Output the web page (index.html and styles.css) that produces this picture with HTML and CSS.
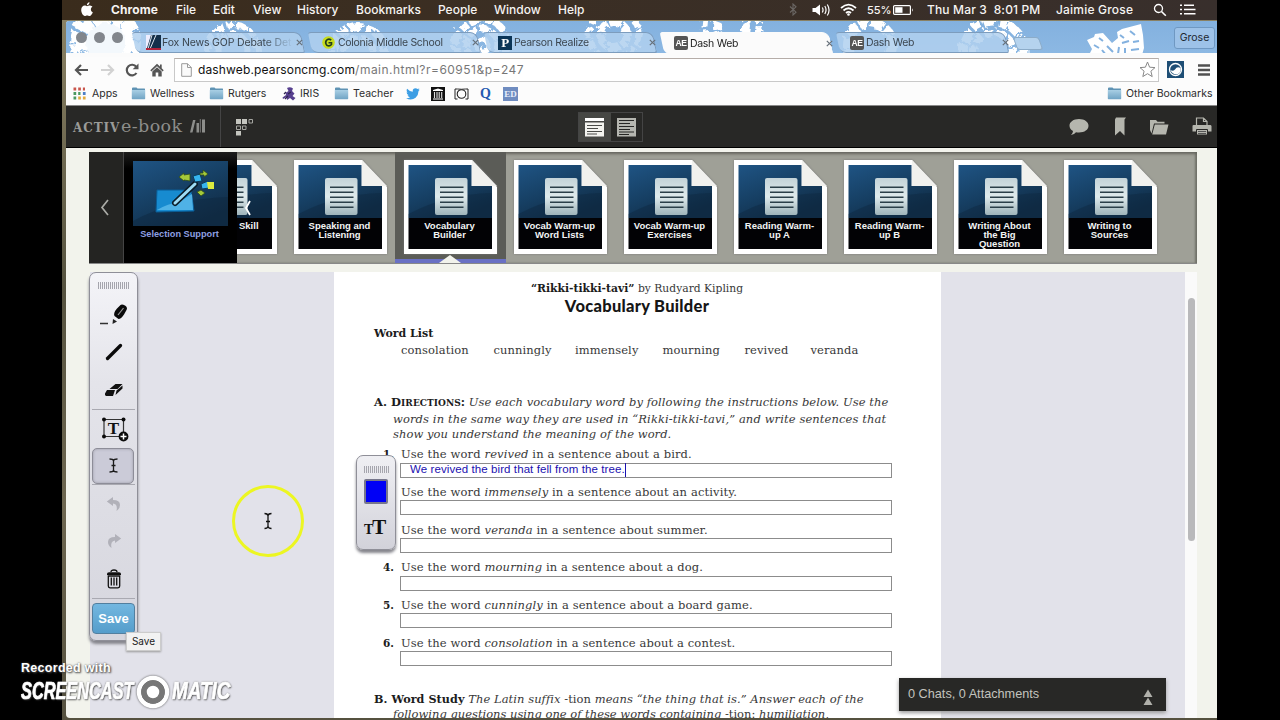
FILE: index.html
```html
<!DOCTYPE html>
<html lang="en">
<head>
<meta charset="utf-8">
<title>Dash Web</title>
<link rel="stylesheet" href="styles.css">
</head>
<body>
<svg class="defs" width="0" height="0">
  <defs>
    <linearGradient id="sky" x1="0" y1="0" x2="0.6" y2="1"><stop offset="0" stop-color="#1f5484"/><stop offset=".55" stop-color="#163f63"/><stop offset="1" stop-color="#112c45"/></linearGradient>
    <linearGradient id="paper" x1="0" y1="0" x2="0" y2="1"><stop offset="0" stop-color="#c3d3d8"/><stop offset=".5" stop-color="#dfeaec"/><stop offset="1" stop-color="#9fb4ba"/></linearGradient>
    <linearGradient id="fold" x1="0" y1="0" x2="0" y2="1"><stop offset="0" stop-color="#a9cfe4"/><stop offset="1" stop-color="#6fa3c4"/></linearGradient>
    <filter id="rough" x="-5%" y="-30%" width="110%" height="160%"><feTurbulence type="turbulence" baseFrequency=".11" numOctaves="2" seed="4"/><feDisplacementMap in="SourceGraphic" scale="7"/></filter>
    <symbol id="card" viewBox="0 0 93 94">
      <path d="M0 0H68L93 27V94H0z" fill="#fff"/>
      <path d="M68 0L93 26H68z" fill="#f1f1ee"/>
      <path d="M4.5 5H67.5V26H88V58H4.5z" fill="url(#sky)"/>
      <path d="M4.5 54Q42 34 88 33V58H4.5z" fill="#0d2840" opacity=".45"/>
      <path d="M4.500 58H88V89H4.500z" fill="#020205"/>
      <rect x="31" y="18" width="32.500" height="37" rx="2" fill="url(#paper)"/>
      <path d="M36 27.300H59.500M36 32.300H59.500M36 37.300H59.500M36 42.300H59.500M36 47.300H59.500" stroke="#2b3f49" stroke-width="1.400"/>
    </symbol>
    <symbol id="folder" viewBox="0 0 15 13">
      <path d="M1 1.500Q1 .5 2 .5H5.500L6.500 1.500H13.500Q14 1.500 14 2.500V11.500H1z" fill="#5f93b4"/>
      <path d="M.8 3H14.200V11.500Q14.200 12.300 13.500 12.300H1.500Q.8 12.300 .8 11.500z" fill="url(#fold)"/>
    </symbol>
    <symbol id="x" viewBox="0 0 7 7"><path d="M.8 .8L6.200 6.200M6.200 .8L.8 6.200" stroke="#66707a" stroke-width="1.200"/></symbol>
    <symbol id="ibeam" viewBox="0 0 10 18"><path d="M1.500 1.500Q4.500 1.500 5 3.500Q5.500 1.500 8.500 1.500M5 3V15M1.500 16.500Q4.500 16.500 5 14.500Q5.500 16.500 8.500 16.500M3 9.500H7" fill="none" stroke="#111" stroke-width="1.300"/></symbol>
  </defs>
</svg>
<div class="desktop">
  <header class="menubar">
    <svg class="apple" width="12" height="15" viewBox="0 0 12 15"><path d="M6 4.200C7 4.200 7.800 3.400 9 3.500C10.200 3.600 11 4.200 11.400 4.800C9.200 6.200 9.500 9.300 11.800 10.300C11 12.300 9.900 14 8.600 14C7.600 14 7.200 13.400 6.200 13.400C5.200 13.400 4.700 14 3.800 14C2 14 .2 10.700 .2 8.100C.2 5.300 1.900 3.600 3.700 3.600C4.800 3.600 5.400 4.200 6 4.200zM5.900 3.300C5.800 1.800 7 .5 8.500 .3C8.700 1.900 7.300 3.400 5.900 3.300z" fill="#fff"/></svg>
    <b class="m-chrome">Chrome</b><span class="m-file">File</span><span class="m-edit">Edit</span><span class="m-view">View</span><span class="m-history">History</span><span class="m-book">Bookmarks</span><span class="m-people">People</span><span class="m-window">Window</span><span class="m-help">Help</span>
    <svg class="bt" width="8" height="13" viewBox="0 0 8 13"><path d="M1 3.500L7 9.200L4 12V1L7 3.800L1 9.500" fill="none" stroke="#6b6764" stroke-width="1.100"/></svg>
    <svg class="vol" width="19" height="14" viewBox="0 0 19 14"><path d="M.5 5H3.500L8 1.500V12.500L3.500 9H.5z" fill="#fff"/><path d="M10.300 4.500Q11.800 7 10.300 9.500M12.800 3Q15.300 7 12.800 11M15.300 1.500Q18.800 7 15.300 12.500" fill="none" stroke="#fff" stroke-width="1.200"/></svg>
    <svg class="wifi" width="17" height="13" viewBox="0 0 17 13"><path d="M1 5Q8.500-1.800 16 5M3.500 7.500Q8.500 3 13.500 7.500M6 10Q8.500 7.800 11 10" fill="none" stroke="#fff" stroke-width="1.700"/><circle cx="8.500" cy="11.500" r="1.300" fill="#fff"/></svg>
    <span class="pct">55%</span>
    <svg class="batt" width="21" height="10" viewBox="0 0 21 10"><rect x=".6" y=".6" width="16.800" height="8.800" rx="1" fill="none" stroke="#fff" stroke-width="1.200"/><path d="M2.200 2.200H9.500V7.800H2.200z" fill="#fff"/><path d="M19 3.200Q20.700 5 19 6.800z" fill="#fff"/></svg>
    <span class="clock">Thu Mar 3&nbsp; 8:01 PM</span><span class="user">Jaimie Grose</span>
    <svg class="mag" width="14" height="14" viewBox="0 0 14 14"><circle cx="5.500" cy="5.500" r="4" fill="none" stroke="#fff" stroke-width="1.300"/><path d="M8.500 8.500L12.800 12.800" stroke="#fff" stroke-width="1.600"/></svg>
    <svg class="lst" width="16" height="11" viewBox="0 0 16 11"><path d="M0 1.200H2M0 5.500H2M0 9.800H2M4 1.200H14M4 5.500H15.500M4 9.800H15.500" stroke="#fff" stroke-width="1.600"/></svg>
  </header>

  <main class="window">
    <div class="tabs">
      <svg class="snow" width="1151" height="32" viewBox="0 0 1151 32">
        <g fill="none" stroke="#fff" filter="url(#rough)">
          <g transform="translate(38 20)"><circle r="32" stroke-width="8" stroke-dasharray="12 3 8 2"/><circle r="24" stroke-width="10" stroke-dasharray="18 2 12 1"/><circle r="10" stroke-width="20" stroke="#f3f8fc"/></g>
          <g transform="translate(165 27)"><circle r="25" stroke-width="6" stroke-dasharray="12 3 7 2"/><circle r="15" stroke-width="7" stroke-dasharray="9 2"/></g>
          <g transform="translate(291 30)"><circle r="26" stroke-width="8" stroke-dasharray="14 3 9 2"/><circle r="15" stroke-width="6" stroke-dasharray="9 3"/></g>
          <g transform="translate(414 22)"><circle r="26" stroke-width="7" stroke-dasharray="14 3 8 2"/><circle r="16" stroke-width="7" stroke-dasharray="10 2"/><circle r="6" stroke-width="5"/></g>
          <g transform="translate(546 12)"><circle r="25" stroke-width="7" stroke-dasharray="11 3 9 2"/><circle r="13" stroke-width="8" stroke-dasharray="12 2"/></g>
          <g transform="translate(664 4)"><circle r="27" stroke-width="7" stroke-dasharray="13 3 9 3"/><circle r="15" stroke-width="8" stroke-dasharray="8 3"/></g>
          <g transform="translate(802 22)"><circle r="22" stroke-width="10" stroke-dasharray="12 2 9 3"/></g>
          <g transform="translate(926 30)"><circle r="31" stroke-width="9" stroke-dasharray="13 3 9 2"/><circle r="20" stroke-width="8" stroke-dasharray="9 3"/></g>
        </g>
        <g transform="translate(1050 34)"><path d="M-29-15L-22-18L-21-21L-13-22L-4-12L2-17L1-23L6-26L25-31L27-20L28-7L26 0H-27L-24-6z" fill="#fff"/><path d="M-22-10L-17-7M-17-17L-13-14M-9-9L-3-3M-14-5L-10 0M4-20L8-17M14-24L19-20M6-12L13-14M17-13L23-14M3-8L2-1M9-7L9-1M15-5L23-6" stroke="#83b1df" stroke-width="2"/></g>
      </svg>
      <div class="lights"><i></i><i></i><i></i></div>
      <div class="tab t1"><svg class="fav" width="15" height="15" viewBox="0 0 15 15"><path d="M0 0H15V15H0z" fill="#14304a"/><path d="M0 0H5L1 13H0z" fill="#eef"/><path d="M6 0L2 14M10 0L4 14" stroke="#dfe6ee" stroke-width="1"/><path d="M0 13H15V15H0z" fill="#b0243a"/></svg><span class="name fade">Fox News GOP Debate Det</span><svg class="cl" width="7" height="7"><use href="#x"/></svg></div>
      <div class="tab t2"><svg class="fav" width="13" height="13" viewBox="0 0 13 13"><circle cx="6.500" cy="6.500" r="6.300" fill="#c6dc1c"/><path d="M9.200 4Q6.500 2 4.300 4.500Q2.800 7 4.800 9.200Q7.500 10.800 9.500 8.500V6.700H6.500" fill="none" stroke="#223c1c" stroke-width="1.600"/></svg><span class="name">Colonia Middle School</span><svg class="cl" width="7" height="7"><use href="#x"/></svg></div>
      <div class="tab t3"><span class="fav pearson">P</span><span class="name">Pearson Realize</span><svg class="cl" width="7" height="7"><use href="#x"/></svg></div>
      <div class="tab t4"><span class="fav ae">AE</span><span class="name">Dash Web</span><svg class="cl" width="7" height="7"><use href="#x"/></svg></div>
      <div class="tab t5"><span class="fav ae">AE</span><span class="name">Dash Web</span><svg class="cl" width="7" height="7"><use href="#x"/></svg></div>
      <div class="newtab"></div>
      <div class="profile">Grose</div>
    </div>

    <div class="toolbar">
      <svg class="nav back" width="15" height="12" viewBox="0 0 15 12"><path d="M14 6H2M7 1L2 6L7 11" fill="none" stroke="#555" stroke-width="2.200"/></svg>
      <svg class="nav fwd" width="15" height="12" viewBox="0 0 15 12"><path d="M1 6H13M8 1L13 6L8 11" fill="none" stroke="#d2d2d2" stroke-width="2.200"/></svg>
      <svg class="nav rel" width="14" height="14" viewBox="0 0 14 14"><path d="M11.500 10A5.300 5.300 0 1 1 11.300 3.800" fill="none" stroke="#555" stroke-width="2.200"/><path d="M13.500 .5V6.300H7.700z" fill="#555"/></svg>
      <svg class="nav home" width="14" height="14" viewBox="0 0 14 14"><path d="M7 .8L.3 7.200L1.400 8.400L7 3.200L12.600 8.400L13.700 7.200L11.700 5.200V1.500H10V3.600z" fill="#555"/><path d="M2.300 8.500L7 4.200L11.700 8.500V13.500H8.300V9.500H5.700V13.500H2.300z" fill="#555"/></svg>
      <div class="url"><svg width="11" height="14" viewBox="0 0 11 14"><path d="M.7 .7H6.500L10.300 4.500V13.300H.7zM6.500 .7V4.500H10.300" fill="#fafafa" stroke="#9a9a9a" stroke-width="1"/></svg><span class="addr">dashweb.pearsoncmg.com<em>/main.html?r=60951&amp;p=247</em></span><svg class="star" width="17" height="17" viewBox="0 0 17 17"><path d="M8.500 1L10.600 6.200L16 6.600L11.900 10.200L13.200 15.600L8.500 12.700L3.800 15.600L5.100 10.200L1 6.600L6.400 6.200z" fill="#fff" stroke="#888" stroke-width="1"/></svg></div>
      <svg class="ext" width="17" height="17" viewBox="0 0 17 17"><path d="M0 0H17V17H0z" fill="#1e4e75"/><circle cx="8.500" cy="8.500" r="6" fill="none" stroke="#fff" stroke-width="1.300"/><path d="M3.200 8.500Q5.500 11.200 8 8.500Q10 5 13.500 7Q14.500 11 11 13Q5.500 14.500 3.200 8.500z" fill="#fff"/></svg>
      <svg class="burger" width="12" height="12" viewBox="0 0 12 12"><path d="M0 1.500H12M0 6H12M0 10.500H12" stroke="#505050" stroke-width="2.300"/></svg>
    </div>

    <div class="bookmarks">
      <svg class="apps" width="13" height="13" viewBox="0 0 13 13"><path d="M.5 2H12" stroke="#c9564c" stroke-width="3" stroke-dasharray="2.700 2"/><path d="M.5 6.500H7.500" stroke="#4c9860" stroke-width="3" stroke-dasharray="2.700 2"/><path d="M9.900 6.500H12.600" stroke="#4c7fc8" stroke-width="3"/><path d="M.5 11H4" stroke="#4c9860" stroke-width="3" stroke-dasharray="2.700 2"/><path d="M5.200 11H12.600" stroke="#e2aa3d" stroke-width="3" stroke-dasharray="2.700 2"/></svg>
      <span class="b-apps">Apps</span>
      <svg class="fo" width="15" height="13"><use href="#folder"/></svg><span class="b-well">Wellness</span>
      <svg class="fo" width="15" height="13"><use href="#folder"/></svg><span class="b-rut">Rutgers</span>
      <svg class="iris" width="14" height="14" viewBox="0 0 14 14"><path d="M5 1Q8-.5 11 1.500L10 4L12.500 6.500L10.500 9L13.500 11L11 13.500L8 11L5 13L4.500 10L1 12L.5 10.500L4 8L3.500 6L6.500 4z" fill="#57408f"/><path d="M2 7L4 5M3 12L6 9M9 5L6 7" stroke="#2f2550" stroke-width="1.200"/></svg><span class="b-iris">IRIS</span>
      <svg class="fo" width="15" height="13"><use href="#folder"/></svg><span class="b-tea">Teacher</span>
      <svg class="tw" width="14" height="12" viewBox="0 0 14 12"><path d="M0 10.300Q2.500 10.500 4 9.300Q2 9 1.500 7.300H2.700Q.6 6.400 .6 4.300L1.800 4.600Q-.1 3 1.100 .8Q3.500 3.600 6.800 3.700Q6.300 .3 9.500 .2Q10.700 .2 11.600 1.100L13.300 .4Q13 1.500 12.200 2L13.800 1.700L12.500 3Q12.600 7 9.600 9.700Q5.500 13 0 10.300z" fill="#3d9ee4"/></svg>
      <svg class="bank" width="14" height="14" viewBox="0 0 14 14"><path d="M0 0H14V14H0z" fill="#111"/><path d="M2 3L7 1.500L12 3V4H2zM2 11.500H12V12.500H2z" fill="#fff"/><path d="M3.500 5V11M6 5V11M8.200 5V11M10.700 5V11" stroke="#ddd" stroke-width="1.100"/></svg>
      <svg class="cam" width="15" height="12" viewBox="0 0 15 12"><path d="M3.500 1H1V11H3.500M11.500 1H14V11H11.500" fill="none" stroke="#222"/><circle cx="7.500" cy="6" r="4.300" fill="none" stroke="#222" stroke-width="1.100"/><path d="M3.500 1Q7.500 1.500 11.500 1" stroke="#333" fill="none"/></svg>
      <span class="qq">Q</span><span class="ed">ED</span>
      <svg class="fo other" width="15" height="13"><use href="#folder"/></svg><span class="b-oth">Other Bookmarks</span>
    </div>

    <div class="appbar">
      <div class="brand"><span class="act">ACTIV</span><span class="ebk">e-book</span><svg width="16" height="14" viewBox="0 0 16 14"><path d="M3 1H5.500L2.500 13.500H0zM6.500 4H9V13.500H6.500zM12 .5H15V13.500H12z" fill="#8d8e8b"/><path d="M10.300 0V13.500" stroke="#777"/></svg></div>
      <svg class="grid" width="19" height="18" viewBox="0 0 19 18"><path d="M1 1H6V6H1zM7 1H12V6H7zM1 13H6V17.500H1z" fill="#c4c5bf"/><path d="M14 1.500H17.500V5H14zM1.500 8H5.500V11.500H1.500zM7.500 8H11V11.500H7.500z" fill="none" stroke="#a4a5a0"/></svg>
      <div class="views">
        <span class="on"><svg width="19" height="20" viewBox="0 0 19 20"><path d="M0 1H19V4H0z" fill="#fff"/><path d="M0 5.500H19V19.500H0z" fill="#f3f3ef"/><path d="M2 8.500H17M2 11.500H13M2 14.500H17M2 17H12" stroke="#4a4b48" stroke-width="1.200"/></svg></span>
        <span><svg width="19" height="20" viewBox="0 0 19 20"><path d="M0 1H19V19.500H0z" fill="#b5b6b0"/><path d="M2 3.500H17M2 6.500H13M2 9.500H17M2 12.500H13M2 15H17M2 17.500H12" stroke="#272725" stroke-width="1.200"/></svg></span>
      </div>
      <svg class="chat" width="20" height="18" viewBox="0 0 20 18"><path d="M10 1C15.500 1 19.500 3.800 19.500 7.800C19.500 11.800 15.500 14.500 10 14.500C8.800 14.500 8 14.400 7 14.200Q5.500 16.500 2 17Q4 15.200 4 13C1.700 11.700 .5 10 .5 7.800C.5 3.800 4.500 1 10 1z" fill="#b5b6ae"/></svg>
      <svg class="mark" width="12" height="19" viewBox="0 0 12 19"><path d="M2 .5H12L10.500 2.500V18.500L6 14L1 18.500V2.500z" fill="#b5b6ae"/></svg>
      <svg class="open" width="20" height="16" viewBox="0 0 20 16"><path d="M1 1H7L8.500 2.800H15.500V4.500H5L2.500 14.500L1 11z" fill="#b5b6ae"/><path d="M5.800 5.500H19.500L17 15.500H3.200z" fill="#b5b6ae"/></svg>
      <svg class="print" width="20" height="20" viewBox="0 0 20 20"><path d="M4.500 8V1H11.500L15 4.500V8M11.500 1V4.500H15" fill="none" stroke="#b5b6ae" stroke-width="1.200"/><path d="M.5 9Q.5 8 1.500 8H18.500Q19.500 8 19.500 9.500V14.500H.5z" fill="#b5b6ae"/><path d="M4.500 12.500H15.500V18H4.500z" fill="#b5b6ae" stroke="#272725"/><path d="M6 14.500H14M6 16.500H14" stroke="#555"/></svg>
    </div>

    <section class="carousel">
      <div class="prev"><svg width="9" height="17" viewBox="0 0 9 17"><path d="M8 1L2 8.500L8 16" fill="none" stroke="#aaaba6" stroke-width="1.700"/></svg></div>
      <div class="support">
        <svg width="95" height="65" viewBox="0 0 95 65"><path d="M0 0H95V65H0z" fill="url(#sky)"/><path d="M0 60Q40 38 95 36V65H0z" fill="#0d2840" opacity=".5"/><path d="M24 29L58 29L61 50L23 51z" fill="#178bd0" stroke="#0b5d96"/><path d="M24 49Q36 42 44 42L59 33L60 49z" fill="#4fb2e6"/><path d="M42 42L62 23" stroke="#0b1e2b" stroke-width="6" stroke-linecap="round"/><path d="M42 42L62 23" stroke="#9edcf5" stroke-width="3" stroke-linecap="round"/><path d="M60 15L67 13L69 20L62 21zM68 23L75 20L76 27L69 28z" fill="#35b3ee" stroke="#0c3c5c"/><path d="M74 21L81 21V28H75z" fill="#dcea3f"/><path d="M46 16L51 12V14L57 13V20L51 19V20zM67 12L70 12V9L75 13L71 16V14H67zM64 31L68 29L72 32L68 35z" fill="#a4c93a" stroke="#2d4b1c" stroke-width=".8"/></svg>
        <span>Selection Support</span>
      </div>
      <div class="track">
        <div class="cell"><svg class="pg" width="93" height="94"><use href="#card"/></svg><span class="skill">Skill</span></div>
        <div class="cell"><svg class="pg" width="93" height="94"><use href="#card"/></svg><span>Speaking and<br>Listening</span></div>
        <div class="cell active"><svg class="pg" width="93" height="94"><use href="#card"/></svg><span>Vocabulary<br>Builder</span></div>
        <div class="cell"><svg class="pg" width="93" height="94"><use href="#card"/></svg><span>Vocab Warm-up<br>Word Lists</span></div>
        <div class="cell"><svg class="pg" width="93" height="94"><use href="#card"/></svg><span>Vocab Warm-up<br>Exercises</span></div>
        <div class="cell"><svg class="pg" width="93" height="94"><use href="#card"/></svg><span>Reading Warm-<br>up A</span></div>
        <div class="cell"><svg class="pg" width="93" height="94"><use href="#card"/></svg><span>Reading Warm-<br>up B</span></div>
        <div class="cell"><svg class="pg" width="93" height="94"><use href="#card"/></svg><span>Writing About<br>the Big<br>Question</span></div>
        <div class="cell"><svg class="pg" width="93" height="94"><use href="#card"/></svg><span>Writing to<br>Sources</span></div>
        <svg class="chev" width="7" height="16" viewBox="0 0 7 16"><path d="M6 1L2 8L6 15" fill="none" stroke="#fff" stroke-width="1.800"/></svg>
      </div>
    </section>

    <section class="reader">
      <article class="sheet">
        <p class="byline"><b>“Rikki-tikki-tavi”</b> by Rudyard Kipling</p>
        <h1>Vocabulary Builder</h1>
        <h2>Word List</h2>
        <div class="words"><span class="w1">consolation</span><span class="w2">cunningly</span><span class="w3">immensely</span><span class="w4">mourning</span><span class="w5">revived</span><span class="w6">veranda</span></div>
        <div class="dir">
          <p class="d1"><b>A. D<small>IRECTIONS</small>:</b> <i>Use each vocabulary word by following the instructions below. Use the</i></p>
          <p class="d2"><i>words in the same way they are used in “Rikki-tikki-tavi,” and write sentences that</i></p>
          <p class="d3"><i>show you understand the meaning of the word.</i></p>
        </div>
        <ol class="qs">
          <li><b>1.</b><p>Use the word <i>revived</i> in a sentence about a bird.</p><div class="box"><span>We revived the bird that fell from the tree.</span></div></li>
          <li><b>2.</b><p>Use the word <i>immensely</i> in a sentence about an activity.</p><div class="box"></div></li>
          <li><b>3.</b><p>Use the word <i>veranda</i> in a sentence about summer.</p><div class="box"></div></li>
          <li><b>4.</b><p>Use the word <i>mourning</i> in a sentence about a dog.</p><div class="box"></div></li>
          <li><b>5.</b><p>Use the word <i>cunningly</i> in a sentence about a board game.</p><div class="box"></div></li>
          <li><b>6.</b><p>Use the word <i>consolation</i> in a sentence about a contest.</p><div class="box"></div></li>
        </ol>
        <div class="study">
          <p class="s1"><b>B. Word Study</b> <i>The Latin suffix</i> -tion <i>means “the thing that is.” Answer each of the</i></p>
          <p class="s2"><i>following questions using one of these words containing</i> -tion: <i>humiliation,</i></p>
        </div>
      </article>
      <div class="scroll"><div class="thumb"></div></div>
    </section>
  </main>
</div>

<aside class="palette">
  <div class="grip"></div>
  <div class="tool"><svg width="30" height="24" viewBox="0 0 30 24"><path d="M1 20.500H9" stroke="#333" stroke-width="1.500"/><path d="M15.500 13Q14 10 18 5.500L21.500 2Q23 .8 26 2.500Q29 4.500 27.500 7L25 11.500Q22 16 19.500 16z" fill="#0a0a0a"/><path d="M19 12L24.500 5" stroke="#999" stroke-width="1.200"/><path d="M14 16L18 18.500L13.500 21z" fill="#222"/></svg></div>
  <div class="tool"><svg width="20" height="20" viewBox="0 0 20 20"><path d="M3.500 16.500L16.500 3.500" stroke="#0a0a0a" stroke-width="3.300" stroke-linecap="round"/></svg></div>
  <div class="tool"><svg width="20" height="14" viewBox="0 0 20 14"><path d="M5.500 6L11.500 1H18.500L13.500 6zM3 7H11L9 13H2Q.5 12 1 10.500zM12.500 7.500L18.500 2.500V5.500L11.500 12z" fill="#111"/></svg></div>
  <hr>
  <div class="tool add"><svg width="28" height="26" viewBox="0 0 28 26"><path d="M3 3.500H22.500V20.500H3z" fill="none" stroke="#333" stroke-width="1.200"/><g fill="#0a0a0a"><circle cx="3" cy="3.500" r="2"/><circle cx="22.500" cy="3.500" r="2"/><circle cx="3" cy="20.500" r="2"/><circle cx="22.500" cy="20.500" r="4.900"/></g><text x="12.500" y="17.500" text-anchor="middle" class="tee">T</text><path d="M22.500 17.500V23.500M19.500 20.500H25.500" stroke="#fff" stroke-width="1.500"/></svg></div>
  <div class="tool sel"><svg width="11" height="15" viewBox="0 0 11 15"><path d="M1.500 1Q5 1 5.500 2.500Q6 1 9.500 1M5.500 2V13M1.500 14Q5 14 5.500 12.500Q6 14 9.500 14M3.500 7.500H7.500" fill="none" stroke="#1a1a1a" stroke-width="1.300"/></svg></div>
  <hr>
  <div class="tool"><svg width="16" height="16" viewBox="0 0 16 16"><path d="M.8 5.500L7 1V4Q14 4 14 9Q14 12.500 10.500 15Q12 8 7 7.500V10z" fill="#b1b1b9"/></svg></div>
  <div class="tool"><svg width="16" height="16" viewBox="0 0 16 16"><path d="M15.200 5.500L9 1V4Q2 4 2 9Q2 12.500 5.500 15Q4 8 9 7.500V10z" fill="#b1b1b9"/></svg></div>
  <div class="tool"><svg width="16" height="20" viewBox="0 0 16 20"><path d="M5 3Q5 1 8 1Q11 1 11 3" fill="none" stroke="#111" stroke-width="1.300"/><path d="M1 5Q1 3.200 3 3.200H13Q15 3.200 15 5V6H1z" fill="#111"/><path d="M2.300 7V17Q2.300 18.800 4 18.800H12Q13.700 18.800 13.700 17V7zM5.300 8.500V16.500M8 8.500V16.500M10.700 8.500V16.500" fill="none" stroke="#111" stroke-width="1.300"/></svg></div>
  <hr>
  <button class="save">Save</button>
</aside>
<div class="tip">Save</div>

<aside class="fmt">
  <div class="grip"></div>
  <div class="swatch"></div>
  <div class="tt"><small>T</small>T</div>
</aside>

<div class="halo"><svg width="10" height="18"><use href="#ibeam"/></svg></div>

<div class="chatbar"><span>0 Chats, 0 Attachments</span><svg width="10" height="17" viewBox="0 0 10 17"><path d="M5 .5L9.500 8H.5zM5 8.500L9.500 16H.5z" fill="#b0b0aa"/></svg></div>

<div class="watermark">
  <div class="rec">Recorded with</div>
  <div class="som"><span class="sc">SCREENCAST</span><svg width="36" height="36" viewBox="0 0 36 36"><circle cx="18" cy="18" r="14" fill="none" stroke="#fff" stroke-width="4.500"/><circle cx="18" cy="18" r="9" fill="#fff" stroke="#777" stroke-width="5.500"/></svg><span class="mt">MATIC</span></div>
</div>
</body>
</html>
```
FILE: styles.css
```css
* { box-sizing: border-box; }
body { margin: 0; width: 1280px; height: 720px; overflow: hidden; background: #000; position: relative; font-family: Inter, "Liberation Sans", sans-serif; }
p, h1, h2, ol { margin: 0; padding: 0; }
svg { display: block; flex: none; }
.defs { position: absolute; }
.desktop { margin-left: 62px; width: 1155px; height: 720px; background: linear-gradient(#8d8466, #55523f 40%, #6d6650 70%, #55513f); display: flex; flex-direction: column; }

.menubar { height: 20px; flex: none; background: linear-gradient(90deg, #3a2c1c, #3b2e22 30%, #382f2c); color: #f6f4f2; font-size: 12px; font-weight: 500; display: flex; align-items: center; white-space: nowrap; padding: 0 0 1px 19px; }
.menubar > * { flex: none; }
.apple { margin-right: 18px; }
.m-chrome { width: 65px; font-weight: 700; letter-spacing: .1px; }
.m-file { width: 37px; } .m-edit { width: 40px; } .m-view { width: 44px; } .m-history { width: 59px; } .m-book { width: 82px; letter-spacing: .05px; } .m-people { width: 56px; } .m-window { width: 64px; } .m-help { width: 231px; }
.bt { width: 8px; margin-right: 15px; } .vol { margin-right: 9px; } .wifi { margin-right: 10px; }
.pct { width: 26px; font-size: 11px; letter-spacing: -.1px; } .batt { margin-right: 13px; }
.clock { width: 129px; letter-spacing: .15px; } .user { width: 97px; letter-spacing: .2px; } .mag { margin-right: 13px; }

.window { margin: 1px 0 0 4px; height: 697px; background: #f2f3ec; display: flex; flex-direction: column; overflow: hidden; border-radius: 3px 0 0 4px; }
.tabs { height: 36px; flex: none; background: linear-gradient(#83b1df, #8cb8e3); border-bottom: 4px solid #fbfbfb; position: relative; z-index: 0; display: flex; align-items: flex-end; }
.snow { position: absolute; z-index: -2; left: 0; top: 0; }
.lights { position: relative; width: 62px; height: 28px; padding-left: 10px; display: flex; gap: 7px; flex: none; }
.lights i { width: 11px; height: 11px; border-radius: 50%; background: #82868c; margin-top: 7px; }
.tab { position: relative; height: 21px; width: 176px; flex: none; display: flex; align-items: center; font-size: 10.500px; letter-spacing: -.3px; color: #3c4650; padding-left: 17px; white-space: nowrap; }
.tab::before { content: ""; position: absolute; z-index: -1; inset: 0 2px 0 5px; background: rgba(176, 208, 238, .85); border: 1px solid #7c9cbd; border-width: 1px 1px 1px 0; border-radius: 3px 7px 2px 6px; transform: skewX(12deg); }
.tab .name { width: 136px; margin-left: 3px; overflow: hidden; }
.t1 { margin-left: 1px; } .t1 .name { width: 134px; margin-left: 1px; letter-spacing: -.15px; } .t1 .fade { -webkit-mask-image: linear-gradient(90deg, #000 76%, transparent 98%); }
.t2 .name { width: 134px; }
.t3 .name { width: 135px; margin-left: 2px; }
.t4 { height: 22px; margin-bottom: -1px; color: #222; } .t4::before { background: #fbfbfb; border-color: #fbfbfb; }
.t4 .name, .t5 .name { width: 136px; margin-left: 2px; }
.fav { flex: none; }
.pearson { width: 14px; height: 14px; background: #0b3557; color: #fff; font: bold 13px/14px "Liberation Serif", serif; text-align: center; }
.ae { width: 14px; height: 14px; background: #555; border-radius: 2px; color: #fff; font: bold 8.500px/14px "Liberation Sans", sans-serif; text-align: center; letter-spacing: -.5px; }
.newtab { width: 26px; height: 13px; margin: 0 0 3px 6px; background: #b5d3ee; border: 1px solid #8cacc9; border-radius: 3px; transform: skewX(20deg); flex: none; }
.profile { width: 41px; height: 22px; margin: 0 2px 4px auto; background: #9dc2e8; border: 1px solid #6f98c2; border-radius: 3px; font-size: 10.500px; line-height: 20px; text-align: center; color: #1d2730; }

.toolbar { height: 25px; flex: none; background: #fcfcfc; display: flex; align-items: center; padding-left: 8px; }
.back { margin-right: 11px; } .fwd { margin-right: 10px; } .rel { margin-right: 11px; } .home { margin-right: 10px; }
.url { flex: none; width: 985px; height: 24px; border: 1px solid #c9c9c9; border-top-color: #b5ada8; background: #fff; display: flex; align-items: center; padding-left: 6px; }
.addr { font-size: 12px; color: #111; margin-left: 6px; width: 949px; letter-spacing: .14px; } .addr em { font-style: normal; color: #777; letter-spacing: .48px; }
.star { margin-left: -8px; }
.ext { margin-left: 8px; } .burger { margin-left: 14px; }
.bookmarks { height: 24px; flex: none; background: #fcfcfc; border-bottom: 1px solid #888; display: flex; align-items: center; padding-left: 7px; font-size: 10.500px; color: #2c2c2c; white-space: nowrap; }
.bookmarks > * { flex: none; }
.apps { margin-right: 6px; }
.b-apps { width: 39px; } .fo { margin-right: 4px; } .b-well { width: 59px; } .b-rut { width: 54px; } .iris { margin-right: 4px; } .b-iris { width: 34px; } .b-tea { width: 53px; }
.tw { margin-right: 11px; } .bank { margin-right: 9px; } .cam { margin-right: 11px; }
.qq { font: bold 14px "Liberation Serif", serif; color: #2459b0; width: 23px; }
.ed { width: 15px; height: 14px; background: #6f8cc0; color: #e8eefa; font: bold 9px/14px "Liberation Serif", serif; text-align: center; }
.other { margin-left: auto; } .b-oth { width: 91px; }

.appbar { height: 42px; flex: none; background: #282826; border-bottom: 1px solid #000; display: flex; align-items: center; }
.brand { width: 155px; height: 41px; border-right: 1px solid #444; display: flex; align-items: center; padding: 0 0 2px 7px; color: #9a9b98; white-space: nowrap; flex: none; }
.act { font: bold 12px "DejaVu Serif", serif; letter-spacing: .9px; width: 48px; padding-top: 4px; }
.ebk { font: 17.500px "DejaVu Serif", serif; width: 69px; letter-spacing: .4px; color: #8d8e8b; }
.grid { margin-left: 14px; }
.views { margin-left: 324px; display: flex; width: 65px; height: 30px; border: 1px solid #444; }
.views span { flex: 1; display: flex; align-items: center; justify-content: center; } .views .on { background: #464744; }
.chat { margin-left: 426px; } .mark { margin-left: 25px; } .open { margin-left: 23px; } .print { margin-left: 23px; }

.carousel { margin: 4px 20px 0 23px; height: 112px; flex: none; display: flex; background: #9fa097; box-shadow: inset 0 2px 3px #66675f, inset -2px 0 2px #77786f; border-bottom: 1px solid #888; }
.prev { width: 35px; background: #242422; border-right: 1px solid #444; display: flex; align-items: center; justify-content: center; flex: none; padding-right: 3px; }
.support { width: 113px; flex: none; background: linear-gradient(#1d1d1c, #000 15%); padding: 9px 0 0 9px; display: flex; flex-direction: column; font: bold 9.200px "Liberation Sans", sans-serif; color: #8d9fe0; }
.support span { width: 93px; text-align: center; margin-top: 3px; white-space: nowrap; }
.track { flex: 1; display: flex; overflow: hidden; position: relative; }
.cell { width: 110px; flex: none; padding: 8px 0 0 9px; position: relative; }
.cell:first-child { margin-left: -62px; }
.pg { filter: drop-shadow(0 0 1px #777); }
.cell span { display: block; margin: -33px 3px 0 0; width: 91px; height: 28px; text-align: center; font: bold 9.500px/9px "Liberation Sans", sans-serif; color: #f2f4f4; position: relative; }
.cell .skill { text-align: left; padding-left: 55px; }
.active { width: 111px; margin-right: -1px; background: #5b5c57; border-bottom: 4px solid #6970c4; }
.active::after { content: ""; position: absolute; left: 44px; bottom: -4px; border: 11px solid transparent; border-bottom: 8px solid #f2f3ec; border-top: 0; }
.chev { position: absolute; left: 7px; top: 48px; }

.reader { margin: 8px 20px 0 24px; flex: 1; background: #e2e2ea; display: flex; min-height: 0; }
.sheet { margin-left: 244px; width: 607px; background: #fff; overflow: hidden; padding: 9px 0 0 40px; font: 11.500px/15.300px "DejaVu Serif", serif; color: #383838; white-space: nowrap; flex: none; }
.sheet b, .sheet h2 { color: #1c1c1c; }
.byline { width: 526px; text-align: center; font-size: 10.750px; line-height: 16px; }
h1 { width: 526px; text-align: center; font: 900 16.500px/18px Lato, sans-serif; letter-spacing: .28px; color: #161616; }
h2 { margin-top: 10px; font-size: 11px; line-height: 17px; }
.words { display: flex; line-height: 17px; padding-left: 27px; letter-spacing: .1px; }
.w1 { width: 92.500px; } .w2 { width: 81.500px; } .w3 { width: 87.500px; } .w4 { width: 82px; } .w5 { width: 66px; }
.dir { margin-top: 36.300px; height: 45.900px; }
.d1 { letter-spacing: .05px; }
.d1 i { letter-spacing: .08px; }
.d2, .d3 { padding-left: 19px; }
.d2 { letter-spacing: .11px; } .d3 { letter-spacing: .06px; }
small { font-size: 9px; }
.qs { list-style: none; margin-top: 5px; }
.qs li { display: grid; grid-template-columns: 20px 492px; column-gap: 6px; height: 37.700px; grid-template-rows: 16.500px 15px; line-height: 16.500px; }
.qs li b { text-align: right; font-size: 10.500px; }
.qs p { padding-left: 1px; letter-spacing: .13px; }
.box { grid-column: 2; border: 1px solid #8c8c8c; height: 15px; }
.box span { display: inline-block; margin-left: 9px; font: 11.500px/12px "Liberation Sans", sans-serif; letter-spacing: .09px; color: #1a10b0; border-right: 1px solid #1a10b0; height: 14px; vertical-align: top; margin-top: -1px; }
.study { margin-top: 19.600px; }
.study b { font-size: 11.200px; }
.s1 { letter-spacing: .06px; }
.s2 { padding-left: 19px; }
.scroll { margin-left: auto; width: 12px; background: #fafafa; padding: 26px 2px 0 3px; }
.thumb { height: 243px; width: 7px; border-radius: 4px; background: #b9b9bb; }

.grip { height: 7px; background: repeating-linear-gradient(90deg, #a5a5ad 0 1px, transparent 1px 2px); flex: none; }
.palette { position: absolute; left: 89px; top: 272px; width: 49px; height: 369px; border: 1px solid #8f8f98; border-radius: 7px; background: linear-gradient(#f4f4f8, #e4e4ea 30%, #d6d6de); box-shadow: 0 3px 3px #85858c; padding: 9px 2px 0; display: flex; flex-direction: column; }
.palette .grip { width: 32px; margin: 0 auto 7px 6px; }
.tool { height: 37.600px; flex: none; display: flex; align-items: center; justify-content: center; }
.palette hr { margin: 0; width: 43px; border: 0; border-top: 1px solid #a9a9b1; height: 1px; flex: none; }
.tool.add { height: 38px; padding-left: 3px; }
.tee { font: bold 17px "Liberation Serif", serif; fill: #111; }
.sel { height: 36px; width: 42px; border: 1px solid #8d8d98; border-radius: 5px; background: #cbcbd8; box-shadow: inset 0 0 3px #9999a4; }
.save { margin: 4.500px 0 0; width: 43px; height: 31px; flex: none; border: 1px solid #527f9f; border-radius: 4px; background: linear-gradient(#73b7e0, #559dcb); color: #fff; font: bold 13px "Liberation Sans", sans-serif; padding: 0; }
.tip { position: absolute; left: 126px; top: 632px; width: 35px; height: 19px; background: #f2f2f2; border: 1px solid #ccc; box-shadow: 0 1px 2px #999; font-size: 10px; line-height: 17px; text-align: center; color: #222; }
.fmt { position: absolute; left: 356px; top: 455px; width: 40px; height: 95px; border: 1px solid #8f8f98; border-radius: 7px; background: linear-gradient(#efeff3, #d2d2da); box-shadow: 0 3px 3px #85858c; padding: 10px 7px 0; }
.fmt .grip { width: 25px; }
.swatch { margin-top: 6px; width: 24px; height: 25px; border: 2px solid #77778c; border-radius: 2px; background: #0000f6; }
.tt { font: bold 21px/24px "Liberation Serif", serif; color: #111; margin-top: 11px; white-space: nowrap; letter-spacing: -1px; } .tt small { font-size: 14px; }
.halo { position: absolute; left: 232px; top: 485px; width: 72px; height: 72px; border: 3px solid #ecf622; border-radius: 50%; display: flex; align-items: center; justify-content: center; padding: 0 1px 1px 0; }
.chatbar { position: absolute; left: 899px; top: 678px; width: 267px; height: 33px; background: #282826; box-shadow: 0 2px 4px #999; color: #c3c3be; font: 12.700px "Liberation Sans", sans-serif; display: flex; align-items: center; justify-content: space-between; padding: 0 13px 2px 9px; }
.chatbar svg { margin-top: 7px; }
.watermark { position: absolute; left: 21px; top: 660px; color: #fff; text-shadow: 1px 1px 2px #444, 0 0 2px #555; font-family: "Liberation Sans", sans-serif; font-weight: bold; white-space: nowrap; }
.rec { font-size: 12.500px; line-height: 16px; letter-spacing: .3px; }
.som { display: flex; align-items: center; height: 31px; font-size: 23px; font-style: italic; }
.som svg { filter: drop-shadow(0 0 1px #555); }
.sc, .mt { transform: scaleX(.71); transform-origin: left; -webkit-text-stroke: .7px #fff; }
.sc { width: 114px; } .mt { width: 60px; margin-left: 1px; transform: scaleX(.82); }
```
